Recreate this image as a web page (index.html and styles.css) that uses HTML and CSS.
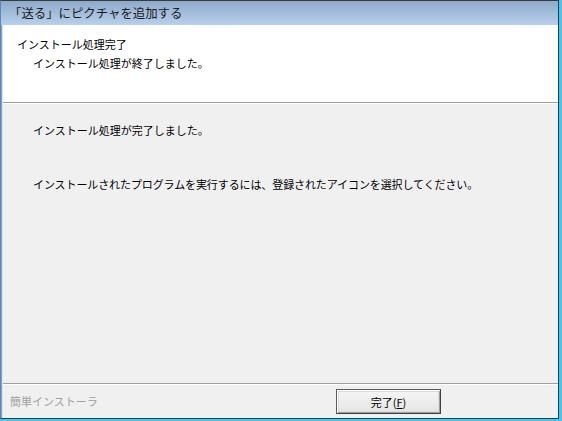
FILE: index.html
```html
<!DOCTYPE html>
<html lang="ja">
<head>
<meta charset="utf-8">
<link rel="stylesheet" href="styles.css">
</head>
<body>
<div class="window">
  <div class="inner">
    <div class="titlebar">「送る」にピクチャを追加する</div>
    <div class="header">
      <div class="h-title">インストール処理完了</div>
      <div class="h-sub">インストール処理が終了しました。</div>
    </div>
    <div class="content">
      <p class="msg">インストール処理が完了しました。</p>
      <p class="msg msg2">インストールされたプログラムを実行するには、登録されたアイコンを選択してください。</p>
    </div>
    <div class="footer">
      <span class="brand">簡単インストーラ</span>
      <button class="btn">完了(<u>F</u>)</button>
    </div>
  </div>
</div>
</body>
</html>
```
FILE: styles.css
```css
html, body {
  margin: 0;
  padding: 0;
  background: #ffffff;
}
body {
  font-family: "Noto Sans CJK JP", "Noto Sans", sans-serif;
  font-size: 11px;
  color: #000;
}
.window {
  width: 562px;
  height: 421px;
  box-sizing: border-box;
  background: #44c6ee;
  padding: 0 3px 2px 0;
}
.inner {
  height: 100%;
  box-sizing: border-box;
  border-top: 1px solid #3a3a3a;
  border-right: 1px solid #2e3a44;
  border-bottom: 1px solid #2e3a44;
  border-left: 1px solid #5f86b6;
  box-shadow: inset 1px 0 0 #7fa0c8, inset 2px 0 0 #dfe6ee;
  background: #f0f0f0;
  display: flex;
  flex-direction: column;
}
.titlebar {
  height: 24px;
  flex: none;
  background: linear-gradient(#8eaacb, #b8d0ea);
  padding-left: 8px;
  font-size: 12.4px;
  line-height: 24px;
  color: #1a1a1a;
}
.header {
  height: 78px;
  flex: none;
  background: #fff;
  margin-left: 2px;
  border-bottom: 1px solid #a0a0a0;
  box-shadow: 0 1px 0 #ffffff;
  box-sizing: border-box;
  padding-top: 10px;
}
.h-title {
  padding-left: 14px;
  line-height: 19px;
}
.h-sub {
  padding-left: 30px;
  line-height: 19px;
}
.content {
  flex: 1;
  margin-left: 2px;
  padding-top: 19px;
  border-bottom: 1px solid #a0a0a0;
  box-shadow: 0 1px 0 #ffffff;
}
.msg {
  margin: 0;
  padding-left: 30px;
  line-height: 16px;
}
.msg2 {
  margin-top: 38px;
  letter-spacing: -0.1px;
}
.footer {
  height: 34px;
  flex: none;
  margin-left: 2px;
  display: flex;
  align-items: flex-start;
  padding-top: 5px;
  box-sizing: border-box;
}
.brand {
  padding-left: 7px;
  color: #a0a0a0;
  line-height: 25px;
  width: 326px;
}
.btn {
  width: 105px;
  height: 25px;
  box-sizing: border-box;
  border: 1px solid #5a5a5a;
  border-right-color: #404040;
  border-bottom-color: #404040;
  box-shadow: inset 1px 1px 0 #ffffff, inset -1px -1px 0 #a0a0a0, inset 0 0 0 2px #dcdcdc;
  background: linear-gradient(#f6f6f6, #e4e4e4);
  font-family: "Noto Sans CJK JP", "Noto Sans", sans-serif;
  font-size: 11px;
  color: #000;
  padding: 0;
  margin: 0;
}
.btn u {
  text-decoration: underline;
}
```
